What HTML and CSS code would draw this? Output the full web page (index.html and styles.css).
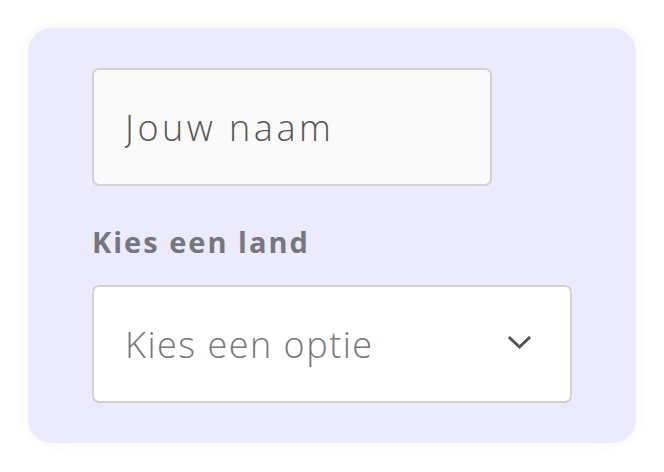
FILE: index.html
```html
<!DOCTYPE html>
<html lang="nl">
<head>
    <meta charset="UTF-8">
    <meta name="viewport" content="width=device-width, initial-scale=1.0">
    <title>Formulier</title>
    <link rel="stylesheet" href="styles.css">
</head>
<body>
    <div class="card">
        <input class="field name-field" type="text" placeholder="Jouw naam">
        <label class="label" for="land">Kies een land</label>
        <div class="select-wrap">
            <select class="field select-field" id="land">
                <option value="">Kies een optie</option>
            </select>
            <svg class="chevron" width="24" height="14" viewBox="0 0 24 14">
                <path d="M2 2 L11.5 11 L21 2" fill="none" stroke="#555" stroke-width="3" stroke-linecap="square"/>
            </svg>
        </div>
    </div>
</body>
</html>
```

FILE: styles.css
```css
body {
    margin: 0;
    padding: 28px;
    background-color: #fff;
    font-family: "Open Sans", "Liberation Sans", sans-serif;
}

.card {
    width: 608px;
    height: 415px;
    box-sizing: border-box;
    padding: 40px 64px;
    background-color: #ecebfd;
    border-radius: 24px;
    box-shadow: 0 0 14px rgba(0, 0, 0, 0.05);
    display: flex;
    flex-direction: column;
    align-items: flex-start;
}

.field {
    box-sizing: border-box;
    height: 118px;
    padding: 0 0 0 31px;
    border: 2px solid #d2d2d4;
    border-radius: 7px;
    font-family: inherit;
    font-size: 36px;
    font-weight: 300;
    letter-spacing: 1.5px;
    outline: none;
}

.name-field {
    width: 400px;
    background-color: #fafafa;
    letter-spacing: 3.5px;
}

.name-field::placeholder {
    color: #555;
    opacity: 1;
}

.label {
    margin: 36px 0 23px;
    line-height: 40px;
    font-size: 29px;
    font-weight: 700;
    letter-spacing: 2px;
    color: #76767e;
}

.select-wrap {
    position: relative;
}

.select-field {
    width: 480px;
    background-color: #fff;
    color: #777;
    appearance: none;
    -webkit-appearance: none;
}

.chevron {
    position: absolute;
    left: 416px;
    top: 51px;
}
```
